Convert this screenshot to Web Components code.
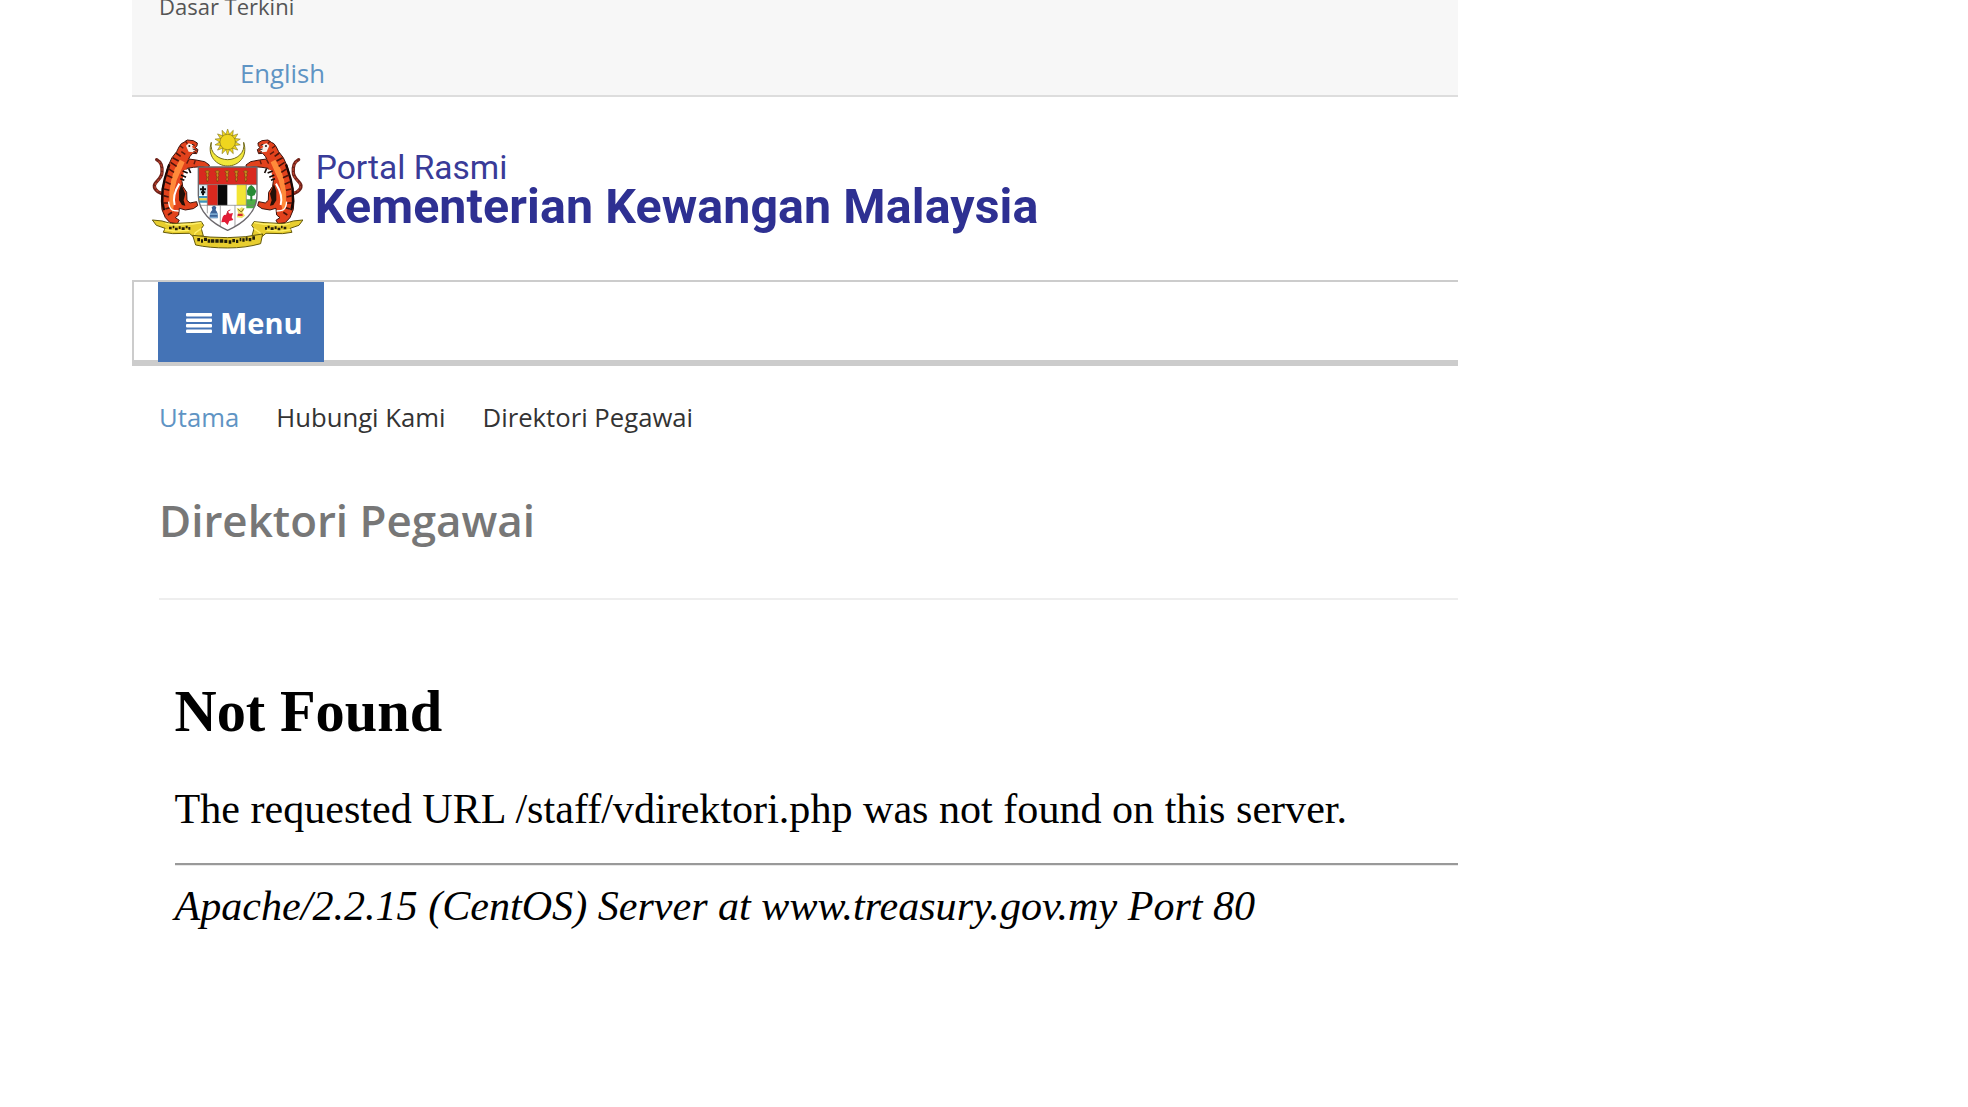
<!DOCTYPE html>
<html lang="ms">
<head>
<meta charset="utf-8">
<title>Direktori Pegawai</title>
<style>
    body {
        margin: 0;
        background: #fff;
        font-family: "Open Sans", sans-serif;
    }
</style>
</head>
<body>
<portal-page>
    <top-bar slot="top">
        <span slot="policy">Dasar Terkini</span>
        <span slot="language">English</span>
    </top-bar>
    <portal-brand slot="top">
        <span slot="tagline">Portal Rasmi</span>
        <span slot="name">Kementerian Kewangan Malaysia</span>
    </portal-brand>
    <menu-bar slot="top">Menu</menu-bar>
    <bread-crumbs items='["Utama", "Hubungi Kami", "Direktori Pegawai"]'></bread-crumbs>
    <page-title>Direktori Pegawai</page-title>
    <server-error>
        <span slot="title">Not Found</span>
        <span slot="message">The requested URL /staff/vdirektori.php was not found on this server.</span>
        <span slot="signature">Apache/2.2.15 (CentOS) Server at www.treasury.gov.my Port 80</span>
    </server-error>
</portal-page>

<script>
// Attach an open shadow root filled with the given html
function render(element, html) {
    const template = document.createElement('template');
    template.innerHTML = html;
    element.attachShadow({mode: 'open'}).appendChild(template.content);
}

/**
 * Page frame, wide bars on top and padded content below
 */
class PortalPage extends HTMLElement {
    constructor() {
        super();
        render(this, `
            <style>
                :host {
                    display: block;
                    width: 1326px;
                    height: 1107px;
                    margin-left: 132px;
                    overflow: hidden;
                }

                main {
                    padding-left: 27px;
                }
            </style>
            <slot name="top"></slot>
            <main><slot></slot></main>
        `);
    }
}

class TopBar extends HTMLElement {
    constructor() {
        super();
        render(this, `
            <style>
                :host {
                    display: flow-root;
                    padding: 0 0 3px 27px;
                    background: #f7f7f7;
                    border-bottom: 2px solid #ddd;
                }

                .policy {
                    margin-top: -9px;
                    font-size: 22px;
                    line-height: 30px;
                    color: #555;
                    white-space: nowrap;
                }

                .language {
                    margin: 35px 0 0 81px;
                    font-size: 25.7px;
                    line-height: 36px;
                    color: #5f94c4;
                }
            </style>
            <div class="policy"><slot name="policy"></slot></div>
            <div class="language"><slot name="language"></slot></div>
        `);
    }
}

/**
 * Coat of arms; the right half of the supporters mirrors the left one
 */
class CoatOfArms extends HTMLElement {
    constructor() {
        super();

        // Rays around the sun
        const rays = [];
        for (let i = 0; i < 14; i++) {
            rays.push(`<path d="M257 43L263 26L269 43Z" transform="rotate(${i * 360 / 14} 263 65)"/>`);
        }

        // Five krises in the red chief
        const krises = [202, 232, 261, 289, 317].map(x => `
            <path d="M${x - 7} 154q7 -8 14 0l-4 5l2 6l-3 6l2 6l-4 8l-3 -8l2 -6l-3 -7l2 -5z"/>
        `).join('');

        const tiger = `
            <path d="M78 224C60 218 42 212 43 196C44 183 66 176 66 156C67 136 64 126 50 118" fill="none" stroke="#6d2118" stroke-width="10" stroke-linecap="round"/>
            <path d="M78 222C60 216 43 210 45 196C46 184 66 176 66 156C67 138 64 128 51 119" fill="none" stroke="#b8402c" stroke-width="4" stroke-dasharray="8 4"/>
            <path d="M124 70L132 66L142 59L160 61L172 68L171 76L166 82L174 88L170 100L158 99L150 108L146 116L168 119L194 124L208 134L206 143L184 139L160 141L142 144L136 162L126 182L128 198L140 216L141 240L150 248L170 244L173 256L160 265L136 269L118 264L116 284L106 292L118 300L112 310L90 307L76 292L66 268L64 242L67 205L76 168L84 138L96 112L110 94L117 80Z" fill="#e2421c" stroke="#3d120c" stroke-width="3"/>
            <path d="M138 76L146 69L160 73L156 80L166 88L160 96L146 94Z" fill="#f8efe8"/>
            <path d="M120 118L104 146L94 178L88 214L88 252L98 276L102 250L102 214L110 180L124 148L134 126Z" fill="#ff8a3a"/>
            <path d="M132 150L146 146L150 158L138 176L127 184Z" fill="#fff"/>
            <path d="M118 190C108 206 98 232 104 254" fill="none" stroke="#fff" stroke-width="6"/>
            <path d="M88 132L82 150L74 176L68 206L67 244L72 270" fill="none" stroke="#180806" stroke-width="7"/>
            <path d="M124 192L117 212L117 240L126 254L136 256L131 240L136 220Z" fill="#241008"/>
            <path d="M108 98L122 108M98 112L116 122M92 126L110 138M84 144L102 156M79 164L97 172M76 184L92 192M72 206L88 210M70 226L86 230M70 248L86 248M76 266L90 262M84 284L96 276" fill="none" stroke="#4a140a" stroke-width="5"/>
            <path d="M120 76L130 84M136 62L142 70M124 94L136 102M146 118L140 130M166 120L162 132" fill="none" stroke="#5d1a0e" stroke-width="4"/>
            <path d="M128 152L143 158M123 164L138 171M133 180L121 175M146 144L152 158" fill="none" stroke="#160b08" stroke-width="5"/>
            <path d="M156 72L164 75M158 86L170 90M160 94L168 97" fill="none" stroke="#222" stroke-width="3"/>
            <circle cx="148" cy="77" r="3" fill="#111"/>
            <path d="M86 244C88 272 100 272 116 272" fill="none" stroke="#fff" stroke-width="4"/>
        `;

        const ribbon = `
            <path d="M37 299L66 302L94 310L151 307L184 304L191 315L184 325L190 347L161 350L148 339L98 340L70 336L75 324L49 315Z" fill="#e8ce2f" stroke="#62580b" stroke-width="3"/>
            <path d="M76 309L99 314L157 311L184 307M74 328L101 332L147 330M161 350L166 337L184 325" fill="none" stroke="#fff06a" stroke-width="4"/>
            <path d="M87 323h8m3 -3h5m2 6h8m3 -4h6m3 3h9m3 -5h6m2 4h6" fill="none" stroke="#29220a" stroke-width="8"/>
        `;

        render(this, `
            <style>
                :host {
                    display: block;
                    width: 153.3px;
                    height: 123.3px;
                }

                svg {
                    display: block;
                    width: 100%;
                    height: 100%;
                }
            </style>
            <svg viewBox="30 20 460 370" aria-hidden="true">
                <defs>
                    <clipPath id="shield"><path d="M175 140H351V225C351 275 309 310 263 330C217 310 175 275 175 225Z"/></clipPath>
                </defs>
                <path d="M214 66C200 108 231 137 263 137C296 137 325 108 311 66C317 98 290 118 263 118C236 118 208 98 214 66Z" fill="#f2e73b" stroke="#71691b" stroke-width="3"/>
                <g fill="#efd51e" stroke="#766a17" stroke-width="1.5">${rays.join('')}<circle cx="263" cy="65" r="23"/></g>
                ${tiger}
                <g transform="translate(526 0) scale(-1 1)">${tiger}</g>
                <g clip-path="url(#shield)">
                    <path d="M170 135H356V335H170Z" fill="#fff"/>
                    <path d="M170 135H356V193H170Z" fill="#d9291f"/>
                    <g fill="#c58a1c" stroke="#7c3a10" stroke-width="2">${krises}</g>
                    <path d="M175 193H202V224H175Z" fill="#d6eef7"/>
                    <path d="M180 207h18M189 198v27M183 216h13" stroke="#111" stroke-width="6"/>
                    <path d="M174 227h29v7h-29zM174 240h29v7h-29z" fill="#3b94bd"/>
                    <path d="M174 234h29v6h-29z" fill="#e8d63b"/>
                    <path d="M202 193H233V255H202Z" fill="#d9291f"/>
                    <path d="M233 193H262V255H233Z" fill="#080808"/>
                    <path d="M290 193H319V255H290Z" fill="#f3e534"/>
                    <path d="M319 237H351V264H319Z" fill="#4fae48"/>
                    <path d="M334 194l8 7 7 12-5 12-7 2v14h-6v-14l-9-3-1-13 5-11z" fill="#278b35"/>
                    <path d="M319 193V255M202 193V279M175 193H351M175 255H351M241 255V322M285 255V322" fill="none" stroke="#777" stroke-width="2"/>
                    <path d="M215 261q8 -10 14 0l-2 8q8 7 6 25h-24q-1 -18 8 -25z" fill="#3b6297"/>
                    <path d="M210 279h23v5h-23zM210 289h23v4h-23z" fill="#78a7cf"/>
                    <path d="M247 294q3 -13 12 -10l3 -12 7 8 10 -2 -4 13 5 8 -12 3 -5 12 -9 -9 -10 1z" fill="#e21c35"/>
                    <path d="M260 284l4 -12 7 -3" fill="none" stroke="#c32c3a" stroke-width="3"/>
                    <path d="M290 262l9 3 7 -5 7 8 -5 8 7 10 -9 7 -16 -2 5 -11z" fill="#f0e364"/>
                    <path d="M293 280h15v7h-15z" fill="#d52c31"/>
                    <path d="M294 267l10 8 8 -11" fill="none" stroke="#776c21" stroke-width="3"/>
                </g>
                <path d="M175 140H351V225C351 275 309 310 263 330C217 310 175 275 175 225Z" fill="none" stroke="#6b686c" stroke-width="4"/>
                ${ribbon}
                <g transform="translate(526 0) scale(-1 1)">${ribbon}</g>
                <path d="M158 345Q210 352 263 352Q316 352 368 341L362 370Q318 383 263 383Q207 383 167 374Z" fill="#e8ce2f" stroke="#62580b" stroke-width="3"/>
                <path d="M172 358h8m3 4h6m3 -5h9m2 5h8m2 0h10m3 0h10m3 0h11m3 1h9m4 2h8m3 -4h8m3 2h7m4 -5h5m3 1h7m3 -3h6m3 2h8m3 -5h8" fill="none" stroke="#211d08" stroke-width="10"/>
            </svg>
        `);
    }
}

class PortalBrand extends HTMLElement {
    constructor() {
        super();
        render(this, `
            <style>
                :host {
                    display: flex;
                    align-items: flex-start;
                    height: 183px;
                    font-family: Roboto, sans-serif;
                    color: #2e3092;
                    white-space: nowrap;
                }

                coat-of-arms {
                    flex: none;
                    margin: 29.7px 0 0 18px;
                }

                .text {
                    margin: 54px 0 0 11.5px;
                }

                .tagline {
                    padding-left: 1px;
                    font-size: 33.5px;
                    line-height: 34px;
                    color: #393b98;
                }

                .name {
                    font-size: 48.3px;
                    font-weight: 700;
                    line-height: 44px;
                    letter-spacing: 0.12px;
                }
            </style>
            <coat-of-arms></coat-of-arms>
            <div class="text">
                <div class="tagline"><slot name="tagline"></slot></div>
                <div class="name"><slot name="name"></slot></div>
            </div>
        `);
    }
}

class MenuBar extends HTMLElement {
    constructor() {
        super();
        render(this, `
            <style>
                :host {
                    display: flex;
                    box-sizing: border-box;
                    height: 86px;
                    border: 2px solid #ccc;
                    border-right: 0;
                    border-bottom-width: 6px;
                }

                /* The button covers the upper part of the thick border */
                button {
                    display: flex;
                    align-items: center;
                    gap: 8px;
                    flex: none;
                    width: 166px;
                    height: 80px;
                    margin: 0 0 0 23.5px;
                    padding: 2px 0 0 28.5px;
                    border: 0;
                    background: #4473b6;
                    color: #fff;
                    font: 700 29px/40px "Open Sans", sans-serif;
                }
            </style>
            <button>
                <svg width="26" height="20" viewBox="0 0 26 20" fill="currentColor" aria-hidden="true">
                    <rect width="26" height="3.6" rx="1"/>
                    <rect y="5.5" width="26" height="3.6" rx="1"/>
                    <rect y="11" width="26" height="3.6" rx="1"/>
                    <rect y="16.4" width="26" height="3.6" rx="1"/>
                </svg>
                <slot></slot>
            </button>
        `);
    }
}

class BreadCrumbs extends HTMLElement {
    constructor() {
        super();
        const items = JSON.parse(this.getAttribute('items'));
        render(this, `
            <style>
                :host {
                    display: flex;
                    gap: 37px;
                    margin-top: 34px;
                    font-size: 25.7px;
                    line-height: 36px;
                    color: #333;
                    white-space: nowrap;
                }

                .link {
                    color: #5f94c4;
                }
            </style>
            ${items.map((item, i) => `<span class="${i === 0 ? 'link' : ''}">${item}</span>`).join('')}
        `);
    }
}

class PageTitle extends HTMLElement {
    constructor() {
        super();
        render(this, `
            <style>
                :host {
                    display: block;
                    margin-top: 54px;
                    padding-bottom: 48px;
                    border-bottom: 2px solid #eee;
                }

                h2 {
                    margin: 0;
                    font-size: 43.9px;
                    font-weight: 600;
                    line-height: 60px;
                    color: #777;
                }
            </style>
            <h2><slot></slot></h2>
        `);
    }
}

/**
 * Plain web server error document
 */
class ServerError extends HTMLElement {
    constructor() {
        super();
        render(this, `
            <style>
                :host {
                    display: block;
                    margin: 78px 0 0 15.5px;
                    font-family: "Liberation Serif", "Times New Roman", serif;
                    font-size: 42.1px;
                    line-height: 50px;
                    color: #000;
                    white-space: nowrap;
                }

                h1 {
                    margin: 0;
                    font-size: 58.4px;
                    line-height: 68px;
                }

                p {
                    margin: 37.5px 0 29.5px;
                }

                hr {
                    height: 1px;
                    margin: 0 0 14.5px;
                    border: 0;
                    border-top: 2px solid #999;
                    background: #e8e8e8;
                }

                address {
                    font-style: italic;
                }
            </style>
            <h1><slot name="title"></slot></h1>
            <p><slot name="message"></slot></p>
            <hr>
            <address><slot name="signature"></slot></address>
        `);
    }
}

customElements.define('coat-of-arms', CoatOfArms);
customElements.define('top-bar', TopBar);
customElements.define('portal-brand', PortalBrand);
customElements.define('menu-bar', MenuBar);
customElements.define('bread-crumbs', BreadCrumbs);
customElements.define('page-title', PageTitle);
customElements.define('server-error', ServerError);
customElements.define('portal-page', PortalPage);
</script>
</body>
</html>
